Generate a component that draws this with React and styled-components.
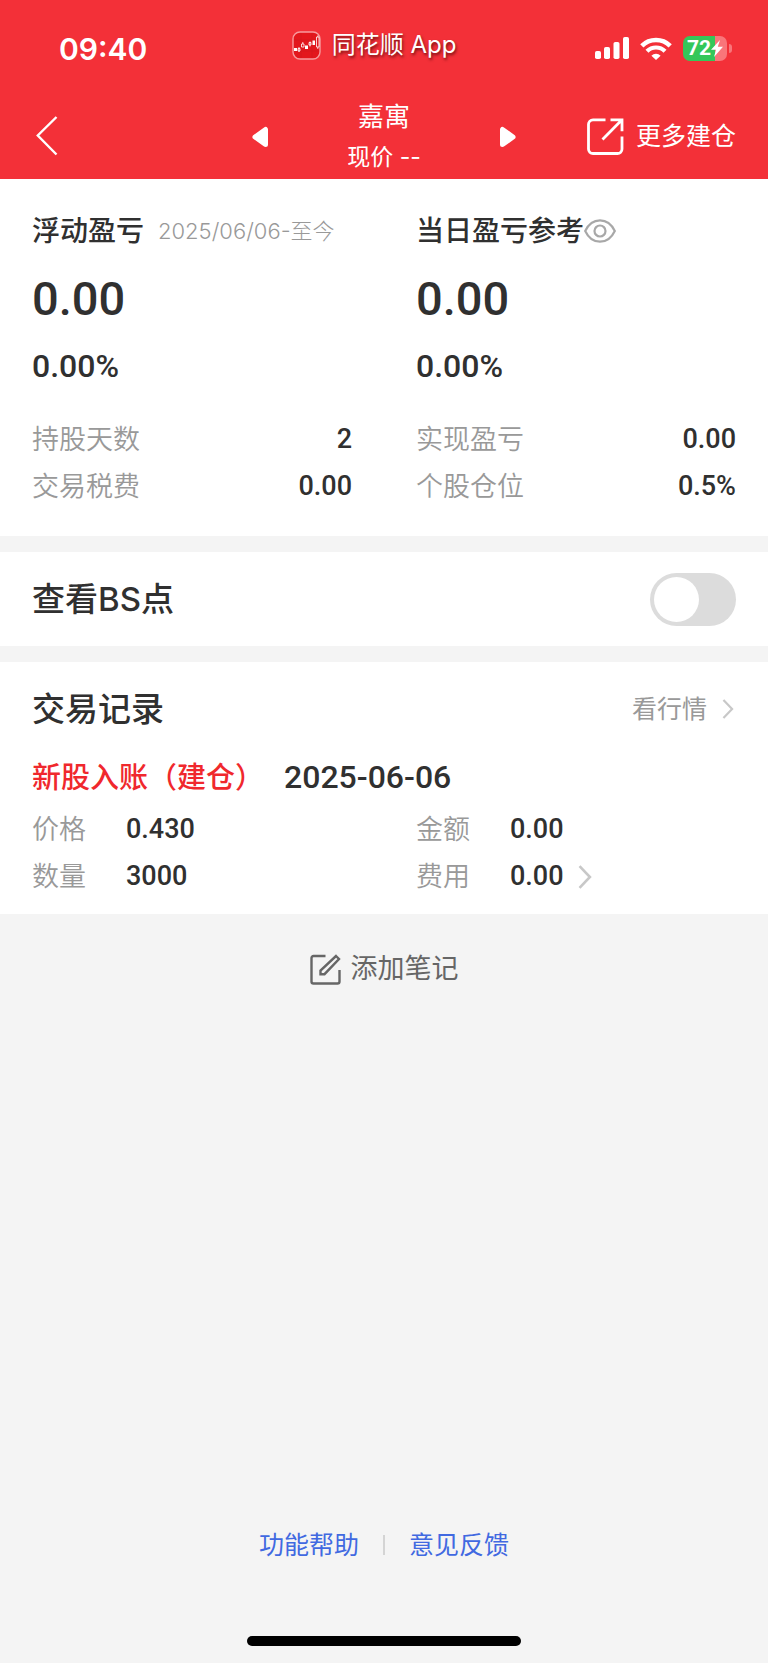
import { useState } from "react";
import styled, { createGlobalStyle } from "styled-components";

const GlobalStyle = createGlobalStyle`
  * {
    box-sizing: border-box;
  }

  body {
    margin: 0;
    background: #f4f4f4;
    color: #303030;
    font-family: Inter, "Noto Sans CJK SC", sans-serif;
  }

  button {
    padding: 0;
    border: none;
    background: none;
    color: inherit;
    font: inherit;
    cursor: pointer;
  }

  h1, h2, p, dl, dd {
    margin: 0;
    font-weight: inherit;
  }

  svg {
    display: block;
    flex: none;
  }
`;

const Page = styled.div`
  display: flex;
  flex-direction: column;
  min-height: 100vh;
`;

const Header = styled.header`
  background: #f33038;
  color: #fff;
`;

const StatusBar = styled.div`
  display: grid;
  grid-template-columns: 1fr auto 1fr;
  align-items: center;
  height: 96px;
  padding: 0 36px 0 16px;
`;

const Time = styled.div`
  padding: 2px 0 0 43px;
  font-size: 30px;
  font-weight: 600;
  line-height: 40px;
`;

const AppName = styled.div`
  display: flex;
  align-items: center;
  gap: 11px;
  padding-bottom: 6px;
  font-size: 24px;
  line-height: 32px;
  text-shadow: 1px 2px 3px rgba(60, 0, 0, 0.7);
`;

const Signals = styled.div`
  display: flex;
  align-items: center;
  justify-content: flex-end;
  gap: 11px;
`;

const Battery = styled.div`
  position: relative;
  display: flex;
  align-items: center;
  justify-content: center;
  width: 44px;
  height: 25px;
  margin-right: 5px;
  border-radius: 7px;
  background: linear-gradient(to right, #34c759 72%, #f9757a 72%);
  font-family: Roboto, sans-serif;
  font-size: 21px;
  font-weight: 700;
  line-height: 25px;

  &::after {
    content: "";
    position: absolute;
    left: 46px;
    top: 8px;
    width: 3px;
    height: 9px;
    border-radius: 0 3px 3px 0;
    background: #f9757a;
  }
`;

const NavBar = styled.nav`
  display: grid;
  grid-template-columns: 1fr 264px 1fr;
  align-items: center;
  height: 83px;
  padding: 0 32px;
`;

const StockSwitch = styled.div`
  display: flex;
  align-items: center;
  justify-content: space-between;
  padding-bottom: 2px;
`;

const StockTitle = styled.div`
  text-align: center;
  line-height: 41px;
`;

const StockName = styled.h1`
  font-size: 26px;
`;

const StockPrice = styled.p`
  font-size: 23px;
`;

const BackButton = styled.button`
  justify-self: start;
  padding: 0 0 4px 4px;
`;

const MoreButton = styled.button`
  display: flex;
  align-items: center;
  justify-self: end;
  gap: 12px;
  padding-bottom: 4px;
  font-size: 25px;
  line-height: 32px;
  white-space: nowrap;
`;

const Section = styled.section`
  margin-bottom: 16px;
  background: #fff;
`;

const Summary = styled(Section)`
  display: grid;
  grid-template-columns: 1fr 1fr;
  padding: 32px 0 26px;
`;

const Column = styled.div`
  padding: 0 32px;
`;

const ColumnHead = styled.div`
  display: flex;
  align-items: center;
  line-height: 40px;
  white-space: nowrap;

  h2 {
    font-size: 28px;
    font-weight: 500;
  }
`;

const Period = styled.span`
  margin-left: 14px;
  color: #999;
  font-size: 22px;
  font-weight: 300;
`;

const BigNumber = styled.p`
  margin-top: 16px;
  font-family: Roboto, sans-serif;
  font-size: 47px;
  font-weight: 500;
  line-height: 64px;
`;

const Percent = styled.p`
  margin-top: 15px;
  font-family: Roboto, sans-serif;
  font-size: 32px;
  font-weight: 500;
  line-height: 40px;
`;

const StatList = styled.dl`
  margin-top: 30px;
`;

const Stat = styled.div`
  display: flex;
  align-items: center;
  justify-content: ${(props) => (props.$spread ? "space-between" : "flex-start")};
  font-size: 27px;
  line-height: 47px;

  dt {
    width: ${(props) => (props.$spread ? "auto" : "94px")};
    color: #999;
    font-weight: 350;
  }

  dd {
    display: flex;
    align-items: center;
    gap: 14px;
    font-family: Roboto, sans-serif;
    font-weight: 500;
  }
`;

const SwitchRow = styled(Section)`
  display: flex;
  align-items: center;
  justify-content: space-between;
  height: 94px;
  padding: 0 32px;
`;

const SwitchLabel = styled.label`
  font-size: 33px;
  font-weight: 500;
  line-height: 44px;
`;

const Toggle = styled.input`
  appearance: none;
  width: 86px;
  height: 53px;
  margin: 0;
  padding: 4px;
  border-radius: 27px;
  background: ${(props) => (props.checked ? "#f33038" : "#dcdcdc")};
  cursor: pointer;

  &::before {
    content: "";
    display: block;
    width: 45px;
    height: 45px;
    margin-left: ${(props) => (props.checked ? "33px" : "0")};
    border-radius: 50%;
    background: #fff;
  }
`;

const Records = styled(Section)`
  margin-bottom: 0;
  padding-bottom: 14px;
`;

const RecordsHead = styled.div`
  display: flex;
  align-items: center;
  justify-content: space-between;
  height: 94px;
  padding: 0 32px;
  line-height: 44px;

  h2 {
    font-size: 33px;
    font-weight: 500;
  }
`;

const QuoteLink = styled.a`
  display: flex;
  align-items: center;
  gap: 15px;
  padding-right: 2px;
  color: #999;
  font-size: 25px;
  text-decoration: none;
`;

const RecordTitle = styled.div`
  display: flex;
  align-items: center;
  gap: 20px;
  padding: 0 32px;
  margin-bottom: 7px;
  line-height: 43px;
`;

const RecordType = styled.span`
  color: #f0282d;
  font-size: 29px;
  font-weight: 500;
`;

const RecordDate = styled.time`
  font-family: Roboto, sans-serif;
  font-size: 32px;
  font-weight: 500;
`;

const RecordGrid = styled.dl`
  display: grid;
  grid-template-columns: 1fr 1fr;

  > div {
    padding: 0 32px;
  }
`;

const NoteButton = styled.button`
  display: flex;
  align-items: center;
  align-self: center;
  gap: 10px;
  margin-top: 35px;
  color: #666;
  font-size: 27px;
  line-height: 40px;
`;

const Footer = styled.footer`
  display: flex;
  flex-direction: column;
  align-items: center;
  gap: 71px;
  margin-top: auto;
  padding-bottom: 17px;
`;

const FooterLinks = styled.div`
  display: flex;
  align-items: center;
  gap: 24px;
  font-size: 25px;
  line-height: 40px;

  a {
    color: #4169e1;
    text-decoration: none;
  }
`;

const Divider = styled.span`
  width: 2px;
  height: 20px;
  background: #d4d4d4;
`;

const HomeBar = styled.div`
  width: 274px;
  height: 10px;
  border-radius: 5px;
  background: #000;
`;

const AppLogo = () => (
  <svg width="29" height="29" viewBox="0 0 29 29" fill="none">
    <rect x="1" y="1" width="27" height="27" rx="7" fill="#e3171d" stroke="#f79a9d" strokeWidth="1.4" />
    <path d="M2 9H27M2 20H27M9 2V27M20 2V27" stroke="#d01a20" strokeWidth="0.6" />
    <path d="M2 17h3v3H2zM13 14.500h3V18h-3zM20.500 9.500h2.500V14h-2.500z" fill="#fff" />
    <path
      d="M6 17.500h2v2.500H6zM7 16v5M9.500 13h2.500v3H9.500zM10.800 11v2M17 11.500h2v2.500h-2zM18 10.500v5M24.500 6h2.500v10h-2.500zM25.800 4.500V6M25.800 16v2"
      stroke="#fff"
      strokeWidth="0.8"
    />
  </svg>
);

const CellularIcon = () => (
  <svg width="34" height="23" viewBox="0 0 34 23" fill="#fff">
    <rect x="0" y="14" width="6" height="8" rx="1.800" />
    <rect x="9" y="10" width="6" height="12" rx="1.800" />
    <rect x="18.500" y="5" width="6" height="17" rx="1.800" />
    <rect x="28" y="0" width="6" height="22" rx="1.800" />
  </svg>
);

const WifiIcon = () => (
  <svg width="32" height="23" viewBox="0 0 32 23" fill="none">
    <path d="M1.800 8.800a20.300 20.300 0 0 1 28.400 0" stroke="#fff" strokeWidth="4.600" />
    <path d="M7 14.300a12.600 12.600 0 0 1 18 0" stroke="#fff" strokeWidth="4.200" />
    <path d="M16 23l-4.600-4.300a6.600 6.600 0 0 1 9.200 0z" fill="#fff" />
  </svg>
);

const BoltIcon = () => (
  <svg width="12" height="17" viewBox="0 0 12 17" fill="#fff">
    <path d="M9 0L0 9.800h5L3 17l9-10.300H6.800z" />
  </svg>
);

const BackIcon = () => (
  <svg width="22" height="40" viewBox="0 0 22 40" fill="none" stroke="#fff" strokeWidth="2.400">
    <path d="M20.500 1L1.800 19.500L20.500 38.500" />
  </svg>
);

const TriangleIcon = ({ flip }) => (
  <svg width="16" height="23" viewBox="0 0 16 23" fill="#fff" stroke="#fff" strokeWidth="5" strokeLinejoin="round">
    <path d={flip ? "M2.500 3.500V18.500L13 11z" : "M13.500 3.500V18.500L3 11z"} />
  </svg>
);

const ExportIcon = () => (
  <svg width="37" height="37" viewBox="0 0 37 37" fill="none" stroke="#fff" strokeWidth="2.800">
    <path d="M18.500 1.800H6a4.500 4.500 0 0 0-4.500 4.500V31A4.500 4.500 0 0 0 6 35.500h24.500A4.500 4.500 0 0 0 35 31V18.500" />
    <path d="M23.500 1.800H35v11.500M34.500 2.300L15.500 21.500" />
  </svg>
);

const EyeIcon = () => (
  <svg width="32" height="24" viewBox="0 0 32 24" fill="none" stroke="#a8a8a8" strokeWidth="2.200">
    <path d="M1.200 12C4.500 5 9.800 1.300 16 1.300S27.500 5 30.800 12C27.500 19 22.200 22.700 16 22.700S4.500 19 1.200 12z" />
    <circle cx="16" cy="12" r="5.500" />
  </svg>
);

const ChevronIcon = ({ width, height }) => (
  <svg width={width} height={height} viewBox="0 0 12 22" fill="none" stroke="#c8c8c8" strokeWidth="2.400">
    <path d="M1 1L10.500 11L1 21" />
  </svg>
);

const NoteIcon = () => (
  <svg width="31" height="31" viewBox="0 0 31 31" fill="none" stroke="#666" strokeWidth="2.400">
    <path d="M15.500 2H3.500A2 2 0 0 0 1.500 4V27.500a2 2 0 0 0 2 2h24a2 2 0 0 0 2-2V16" />
    <path d="M26 2L29 5L14.500 20.200H10.500V16.500z" />
  </svg>
);

const columns = [
  {
    title: "浮动盈亏",
    period: "2025/06/06-至今",
    amount: "0.00",
    percent: "0.00%",
    stats: [
      ["持股天数", "2"],
      ["交易税费", "0.00"],
    ],
  },
  {
    title: "当日盈亏参考",
    amount: "0.00",
    percent: "0.00%",
    stats: [
      ["实现盈亏", "0.00"],
      ["个股仓位", "0.5%"],
    ],
  },
];

const record = [
  { label: "价格", value: "0.430" },
  { label: "金额", value: "0.00" },
  { label: "数量", value: "3000" },
  { label: "费用", value: "0.00", more: true },
];

const App = () => {
  const [showPoints, setShowPoints] = useState(false);

  return (
    <Page>
      <GlobalStyle />
      <Header>
        <StatusBar>
          <Time>09:40</Time>
          <AppName>
            <AppLogo />
            <span>同花顺 App</span>
          </AppName>
          <Signals>
            <CellularIcon />
            <WifiIcon />
            <Battery>
              72
              <BoltIcon />
            </Battery>
          </Signals>
        </StatusBar>
        <NavBar>
          <BackButton type="button" aria-label="返回">
            <BackIcon />
          </BackButton>
          <StockSwitch>
            <button type="button" aria-label="上一个">
              <TriangleIcon />
            </button>
            <StockTitle>
              <StockName>嘉寓</StockName>
              <StockPrice>现价 --</StockPrice>
            </StockTitle>
            <button type="button" aria-label="下一个">
              <TriangleIcon flip />
            </button>
          </StockSwitch>
          <MoreButton type="button">
            <ExportIcon />
            更多建仓
          </MoreButton>
        </NavBar>
      </Header>

      <Summary>
        {columns.map((column) => (
          <Column key={column.title}>
            <ColumnHead>
              <h2>{column.title}</h2>
              {column.period ? (
                <Period>{column.period}</Period>
              ) : (
                <button type="button" aria-label="显示或隐藏">
                  <EyeIcon />
                </button>
              )}
            </ColumnHead>
            <BigNumber>{column.amount}</BigNumber>
            <Percent>{column.percent}</Percent>
            <StatList>
              {column.stats.map(([label, value]) => (
                <Stat key={label} $spread>
                  <dt>{label}</dt>
                  <dd>{value}</dd>
                </Stat>
              ))}
            </StatList>
          </Column>
        ))}
      </Summary>

      <SwitchRow>
        <SwitchLabel htmlFor="bs-points">查看BS点</SwitchLabel>
        <Toggle
          id="bs-points"
          type="checkbox"
          role="switch"
          checked={showPoints}
          onChange={(e) => setShowPoints(e.target.checked)}
        />
      </SwitchRow>

      <Records>
        <RecordsHead>
          <h2>交易记录</h2>
          <QuoteLink href="#quote">
            看行情
            <ChevronIcon width={12} height={20} />
          </QuoteLink>
        </RecordsHead>
        <RecordTitle>
          <RecordType>新股入账（建仓）</RecordType>
          <RecordDate>2025-06-06</RecordDate>
        </RecordTitle>
        <RecordGrid>
          {record.map((item) => (
            <Stat key={item.label}>
              <dt>{item.label}</dt>
              <dd>
                {item.value}
                {item.more && <ChevronIcon width={14} height={24} />}
              </dd>
            </Stat>
          ))}
        </RecordGrid>
      </Records>

      <NoteButton type="button">
        <NoteIcon />
        添加笔记
      </NoteButton>

      <Footer>
        <FooterLinks>
          <a href="#help">功能帮助</a>
          <Divider />
          <a href="#feedback">意见反馈</a>
        </FooterLinks>
        <HomeBar />
      </Footer>
    </Page>
  );
};

export default App;
